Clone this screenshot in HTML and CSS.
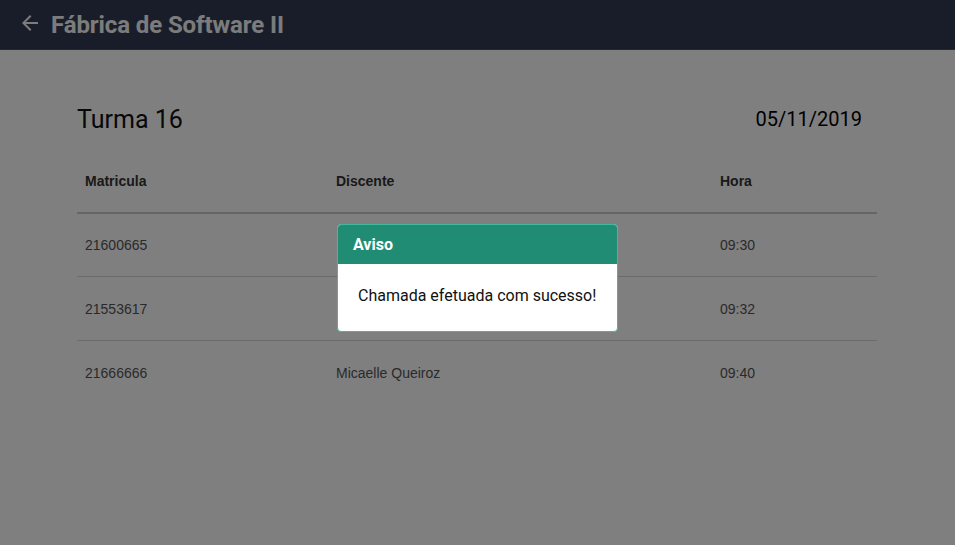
FILE: index.html
```html
<!DOCTYPE html>
<html lang="pt">
<head>
<meta charset="utf-8">
<title>Fábrica de Software II</title>
<link rel="stylesheet" href="styles.css">
</head>
<body>
<div class="page">
  <header class="topbar">
    <svg class="back" width="24" height="24" viewBox="0 0 24 24"><path d="M20 11H7.83l5.59-5.59L12 4l-8 8 8 8 1.41-1.41L7.83 13H20v-2z" fill="currentColor"/></svg>
    <h1 class="app-title">Fábrica de Software II</h1>
  </header>
  <main class="content">
    <div class="heading">
      <h2 class="turma">Turma 16</h2>
      <span class="date">05/11/2019</span>
    </div>
    <table class="list">
      <thead>
        <tr><th class="c1">Matricula</th><th class="c2">Discente</th><th class="c3">Hora</th></tr>
      </thead>
      <tbody>
        <tr><td>21600665</td><td></td><td>09:30</td></tr>
        <tr><td>21553617</td><td></td><td>09:32</td></tr>
        <tr><td>21666666</td><td>Micaelle Queiroz</td><td>09:40</td></tr>
      </tbody>
    </table>
  </main>
  <div class="overlay">
    <div class="dialog">
      <div class="dialog-head">Aviso</div>
      <div class="dialog-body">Chamada efetuada com sucesso!</div>
    </div>
  </div>
</div>
</body>
</html>
```
FILE: styles.css
```css
html, body {
  margin: 0;
  padding: 0;
  background: #ffffff;
}
body {
  width: 966px;
  height: 545px;
  overflow: hidden;
}
.page {
  position: relative;
  width: 955px;
  height: 545px;
  background: #ffffff;
  font-family: Roboto, "Liberation Sans", sans-serif;
}
.topbar {
  height: 49px;
  background: #333b55;
  border-bottom: 1px solid #4a5064;
  display: flex;
  align-items: center;
  padding-left: 18px;
  color: #f8f8f8;
}
.back {
  display: block;
  margin-top: -3px;
}
.app-title {
  margin: 0 0 0 9px;
  font-size: 24px;
  font-weight: 700;
  letter-spacing: -0.1px;
  margin-top: 1px;
}
.content {
  width: 800px;
  margin-left: 77px;
}
.heading {
  display: flex;
  justify-content: space-between;
  align-items: center;
  height: 40px;
  margin-top: 49px;
  padding-right: 15px;
}
.turma {
  margin: 0;
  font-size: 25px;
  font-weight: 400;
  color: #111;
}
.date {
  font-size: 20px;
  color: #000;
}
.list {
  width: 800px;
  border-collapse: collapse;
  margin-top: 11px;
  font-family: "Liberation Sans", Arial, sans-serif;
  font-size: 14px;
}
.list th {
  text-align: left;
  font-weight: 700;
  color: #333;
  height: 62px;
  padding: 0 8px;
  border-bottom: 2px solid #cccccc;
}
.list .c1 { width: 235px; }
.list .c2 { width: 368px; }
.list td {
  height: 63px;
  padding: 0 8px;
  color: #555;
  border-bottom: 1px solid #d6d6d6;
}
.list tbody tr:first-child td {
  height: 62px;
}
.list tbody tr:last-child td {
  border-bottom: none;
}
.overlay {
  position: absolute;
  inset: 0;
  background: rgba(0, 0, 0, 0.5);
  display: flex;
  justify-content: center;
  align-items: flex-start;
  padding-top: 224px;
  box-sizing: border-box;
}
.dialog {
  width: 281px;
  border-radius: 4px;
  overflow: hidden;
  background: #fff;
  border: 1px solid #44b89c;
  box-sizing: border-box;
}
.dialog-head {
  height: 39px;
  background: #218c74;
  color: #fff;
  font-weight: 700;
  font-size: 16px;
  display: flex;
  align-items: center;
  padding-left: 15px;
}
.dialog-body {
  height: 67px;
  display: flex;
  align-items: center;
  padding-left: 20px;
  padding-bottom: 5px;
  box-sizing: border-box;
  font-size: 16px;
  color: #111;
}
```
